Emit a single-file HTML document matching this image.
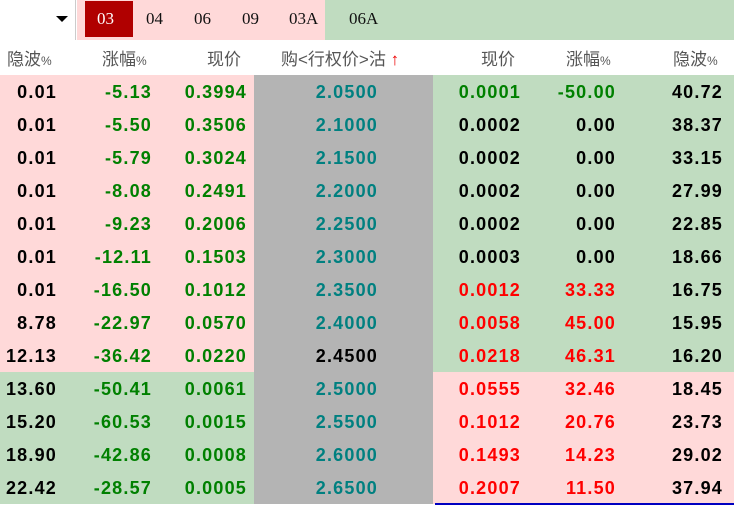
<!DOCTYPE html>
<html><head><meta charset="utf-8"><style>
*{margin:0;padding:0;box-sizing:border-box}
body{width:734px;height:507px;background:#fff;position:relative;overflow:hidden;font-family:"Liberation Sans","Noto Sans CJK SC",sans-serif}
.top{position:absolute;top:0;left:0;width:734px;height:40px}
.sel{position:absolute;left:0;top:0;width:76px;height:40px;background:#fff;border-right:1px solid #ccc}
.arr{position:absolute;left:56px;top:16px;width:0;height:0;border-left:6px solid transparent;border-right:6px solid transparent;border-top:6px solid #000}
.pk{position:absolute;left:77px;top:0;width:248px;height:40px;background:#ffd9d9}
.gn{position:absolute;left:325px;top:0;width:409px;height:40px;background:#c0dcc0}
.tab{position:absolute;top:1px;height:36px;line-height:36px;font-family:"Liberation Serif","Noto Serif CJK SC",serif;font-size:17px;color:#111}
.hdr{position:absolute;top:40px;left:0;width:734px;height:35px;font-size:17px;color:#555}
.hdr span{position:absolute;top:5px}
.row{position:absolute;left:0;width:734px;height:33px;font-weight:bold;font-size:18px;letter-spacing:1.2px}
.row div{position:absolute;top:0;height:33px;line-height:34px}
.c{text-align:right}
.L{left:0;width:254px}.G{left:254px;width:179px;background:#b4b4b4}.R{left:433px;width:301px}
.P{background:#ffd9d9}.N{background:#c0dcc0}
.g{color:#008000}.t{color:#008080}.r{color:#f00}.k{color:#000}
</style></head><body>
<div class="top"><div class="sel"><div class="arr"></div></div><div class="pk"></div><div class="gn"></div>
<div style="position:absolute;left:85px;top:1px;width:48px;height:36px;background:#b00000"></div>
<div class="tab" style="left:97px;color:#fff">03</div>
<div class="tab" style="left:146px">04</div>
<div class="tab" style="left:194px">06</div>
<div class="tab" style="left:242px">09</div>
<div class="tab" style="left:289px">03A</div>
<div class="tab" style="left:349px">06A</div>
</div>
<div class="hdr">
<span style="left:7px">隐波<small style="font-size:12px">%</small></span>
<span style="left:102px">涨幅<small style="font-size:12px">%</small></span>
<span style="left:207px">现价</span>
<span style="left:281px">购&lt;行权价&gt;沽 <b style="color:#e00;font-weight:normal">↑</b></span>
<span style="left:481px">现价</span>
<span style="left:566px">涨幅<small style="font-size:12px">%</small></span>
<span style="left:673px">隐波<small style="font-size:12px">%</small></span>
</div>
<div id="rows"></div>
<div style="position:absolute;left:435px;top:503px;width:299px;height:2px;background:#0000c0"></div>
<script>
var d=[
["0.01","-5.13","0.3994","2.0500","0.0001","-50.00","40.72","g"],
["0.01","-5.50","0.3506","2.1000","0.0002","0.00","38.37","k"],
["0.01","-5.79","0.3024","2.1500","0.0002","0.00","33.15","k"],
["0.01","-8.08","0.2491","2.2000","0.0002","0.00","27.99","k"],
["0.01","-9.23","0.2006","2.2500","0.0002","0.00","22.85","k"],
["0.01","-12.11","0.1503","2.3000","0.0003","0.00","18.66","k"],
["0.01","-16.50","0.1012","2.3500","0.0012","33.33","16.75","r"],
["8.78","-22.97","0.0570","2.4000","0.0058","45.00","15.95","r"],
["12.13","-36.42","0.0220","2.4500","0.0218","46.31","16.20","r"],
["13.60","-50.41","0.0061","2.5000","0.0555","32.46","18.45","r"],
["15.20","-60.53","0.0015","2.5500","0.1012","20.76","23.73","r"],
["18.90","-42.86","0.0008","2.6000","0.1493","14.23","29.02","r"],
["22.42","-28.57","0.0005","2.6500","0.2007","11.50","37.94","r"]];
var h="";
d.forEach(function(r,i){
var lb=i<9?"P":"N",rb=i<9?"N":"P",st=i==8?"k":"t";
h+='<div class="row" style="top:'+(75+i*33)+'px">'+
'<div class="L '+lb+'"></div><div class="G"></div><div class="R '+rb+'"></div>'+
'<div class="c k" style="left:0;width:57px">'+r[0]+'</div>'+
'<div class="c g" style="left:60px;width:92px">'+r[1]+'</div>'+
'<div class="c g" style="left:150px;width:97px">'+r[2]+'</div>'+
'<div class="c '+st+'" style="left:280px;width:98px">'+r[3]+'</div>'+
'<div class="c '+r[7]+'" style="left:440px;width:81px">'+r[4]+'</div>'+
'<div class="c '+r[7]+'" style="left:530px;width:86px">'+r[5]+'</div>'+
'<div class="c k" style="left:640px;width:83px">'+r[6]+'</div></div>';
});
document.getElementById("rows").innerHTML=h;
</script>
</body></html>
